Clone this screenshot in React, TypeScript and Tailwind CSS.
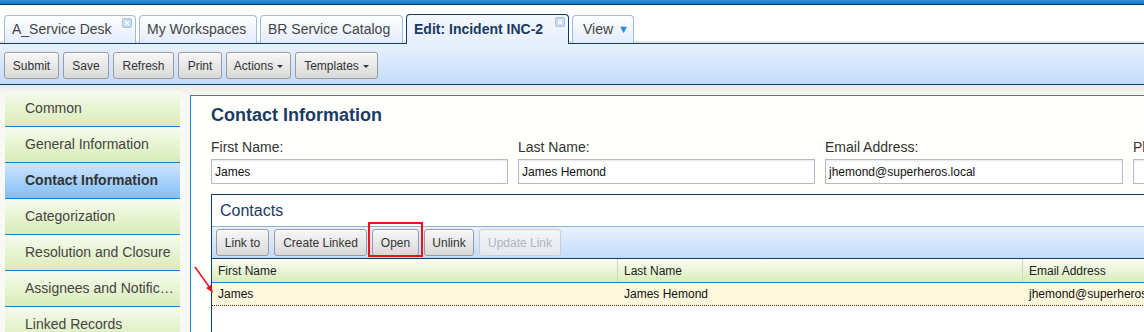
import React from "react";

const font = { fontFamily: '"Liberation Sans", Arial, sans-serif' };

function CloseIcon() {
  return (
    <span className="absolute right-[3px] top-[2px] w-[10px] h-[10px] rounded-[2px] bg-[#c9d9ef] border border-[#aac3e3] flex items-center justify-center">
      <svg width="6" height="6" viewBox="0 0 6 6">
        <path d="M1 1L5 5M5 1L1 5" stroke="#ffffff" strokeWidth="1.4" />
      </svg>
    </span>
  );
}

function Tab({ label, w, active, close, children }: { label?: string; w: string; active?: boolean; close?: boolean; children?: React.ReactNode }) {
  return (
    <div
      className={
        "relative h-[28px] rounded-t-[4px] border border-b-0 flex items-center pl-[7px] text-[14px] " +
        w +
        (active
          ? " border-[#0b3e6a] bg-gradient-to-b from-[#f4f8fe] to-[#e6effd] text-[#1a3a5e] font-bold h-[30px] mb-[-1px] z-10"
          : " border-[#9fbde3] bg-gradient-to-b from-[#ffffff] to-[#e2ecfb] text-[#444]")
      }
    >
      {label}
      {children}
      {close && <CloseIcon />}
    </div>
  );
}

function Btn({ children, w, disabled }: { children: React.ReactNode; w: string; disabled?: boolean }) {
  return (
    <div
      className={
        "h-[27px] rounded-[3px] border flex items-center justify-center text-[12px] " +
        w +
        (disabled
          ? " border-[#c8cdd6] bg-gradient-to-b from-[#f3f5f8] to-[#e3e7ee] text-[#b0b4bc]"
          : " border-[#9a9a9a] bg-gradient-to-b from-[#f7f7f7] to-[#d9d9d9] text-[#333] shadow-[inset_0_1px_0_#ffffff]")
      }
    >
      {children}
    </div>
  );
}

function Caret() {
  return <span className="inline-block ml-[4px] mt-[1px] w-0 h-0 border-l-[3px] border-r-[3px] border-t-[3px] border-l-transparent border-r-transparent border-t-[#333]" />;
}

const navItems = [
  "Common",
  "General Information",
  "Contact Information",
  "Categorization",
  "Resolution and Closure",
  "Assignees and Notific…",
  "Linked Records",
];

function Field({ label, value, w }: { label: string; value: string; w: string }) {
  return (
    <div className={"flex flex-col shrink-0 " + w}>
      <div className="h-[16px] leading-[16px] text-[14px] text-[#333]">{label}</div>
      <div className="mt-[4px] h-[25px] border border-[#b4bccb] bg-white shadow-[inset_0_1px_2px_#e2e6ee] flex items-center pl-[3px] text-[12px] text-[#111]">
        {value}
      </div>
    </div>
  );
}

export default function App() {
  return (
    <div style={font} className="w-[1144px] h-[332px] overflow-hidden bg-[#f7f7f4] relative">
      {/* top bar */}
      <div className="h-[4px] bg-gradient-to-b from-[#2b93da] to-[#1178c4] border-b border-[#0b3e6a] box-content" />
      {/* tabs */}
      <div className="h-[38px] bg-white flex items-end pl-[4px] gap-[3px] relative">
        <div className="absolute left-0 right-0 bottom-0 h-[2px] bg-[#e4e4e4]" />
        <Tab label="A_Service Desk" w="w-[132px]" close />
        <Tab label="My Workspaces" w="w-[118px]" />
        <Tab label="BR Service Catalog" w="w-[143px]" />
        <Tab label="Edit: Incident INC-2" w="w-[163px]" active close />
        <Tab w="w-[62px]">
          <span className="text-[#444] ml-[3px]">View</span>
          <span className="ml-[5px] text-[#2a8ad8] text-[11px]">▼</span>
        </Tab>
      </div>
      {/* toolbar */}
      <div className="h-[42px] border-t border-b border-[#0b3e6a] bg-gradient-to-b from-[#e9f1fd] to-[#c2dbfb] flex items-center pl-[4px] gap-[4px] pt-[3px]">
        <Btn w="w-[55px]">Submit</Btn>
        <Btn w="w-[46px]">Save</Btn>
        <Btn w="w-[61px]">Refresh</Btn>
        <Btn w="w-[44px]">Print</Btn>
        <Btn w="w-[65px]">
          Actions
          <Caret />
        </Btn>
        <Btn w="w-[83px]">
          Templates
          <Caret />
        </Btn>
      </div>
      {/* content */}
      <div className="relative flex pt-[6px] pl-[5px] bg-gradient-to-b from-[#ececec] to-[#f8f8f5] to-[12px]">
        {/* nav */}
        <div className="w-[175px] shrink-0 flex flex-col">
          {navItems.map((n) => {
            const sel = n === "Contact Information";
            return (
              <div
                key={n}
                className={
                  "h-[36px] border-b border-[#1a7fd0] flex items-center pl-[20px] text-[14px] " +
                  (sel
                    ? "bg-gradient-to-b from-[#cfe4fe] to-[#80bff5] font-bold text-[#333]"
                    : "bg-gradient-to-b from-[#f6fbee] to-[#d9ecb6] text-[#444]")
                }
              >
                {n}
              </div>
            );
          })}
        </div>
        {/* main panel */}
        <div className="ml-[10px] mt-[4px] flex-1 border-l border-t border-[#1a86d8] bg-[#fffffb] pl-[20px] pt-[8px] h-[300px] min-w-0">
          <div className="h-[22px] leading-[22px] text-[18px] font-bold text-[#1a3c64]">Contact Information</div>
          <div className="mt-[13px] flex gap-[10px]">
            <Field label="First Name:" value="James" w="w-[297px]" />
            <Field label="Last Name:" value="James Hemond" w="w-[297px]" />
            <Field label="Email Address:" value="jhemond@superheros.local" w="w-[298px]" />
            <Field label="Phone:" value="" w="w-[297px]" />
          </div>
          {/* contacts */}
          <div className="mt-[10px] w-[1000px] border-l border-t border-[#0b3e6a] bg-white h-[200px]">
            <div className="h-[31px] flex items-center pl-[8px] text-[16px] text-[#1a3c64]">Contacts</div>
            <div className="h-[33px] border-t border-[#8ab4e0] border-b border-b-[#0b3e6a] bg-gradient-to-b from-[#e9f1fd] to-[#c2dbfb] flex items-center pl-[4px] gap-[5px]">
              <Btn w="w-[53px]">Link to</Btn>
              <Btn w="w-[93px]">Create Linked</Btn>
              <div className="relative">
                <Btn w="w-[47px]">Open</Btn>
                <div className="absolute left-[-4px] top-[-7px] w-[55px] h-[35px] border-2 border-[#e8141a]" />
              </div>
              <Btn w="w-[50px]">Unlink</Btn>
              <Btn w="w-[82px]" disabled>Update Link</Btn>
            </div>
            <div className="h-[24px] border-b border-[#1a86d8] bg-gradient-to-b from-[#fbfdf6] to-[#d8ecb8] flex text-[12px] text-[#222]">
              <div className="w-[406px] border-r border-[#cfd6c6] flex items-center pl-[6px]">First Name</div>
              <div className="w-[405px] border-r border-[#cfd6c6] flex items-center pl-[6px]">Last Name</div>
              <div className="flex-1 flex items-center pl-[6px]">Email Address</div>
            </div>
            <div className="h-[23px] border-b border-dotted border-[#333] bg-[#fdf8dc] flex text-[12px] text-[#111]">
              <div className="w-[406px] flex items-center pl-[6px]">James</div>
              <div className="w-[405px] flex items-center pl-[6px]">James Hemond</div>
              <div className="flex-1 flex items-center pl-[6px]">jhemond@superheros.local</div>
            </div>
          </div>
        </div>
      </div>
      {/* red arrow */}
      <svg className="absolute left-[190px] top-[264px]" width="30" height="34" viewBox="0 0 30 34">
        <path d="M5 3 L20 24" stroke="#e8141a" strokeWidth="1.5" />
        <path d="M23 29 L16 24 L21 21 Z" fill="#e8141a" />
      </svg>
    </div>
  );
}
